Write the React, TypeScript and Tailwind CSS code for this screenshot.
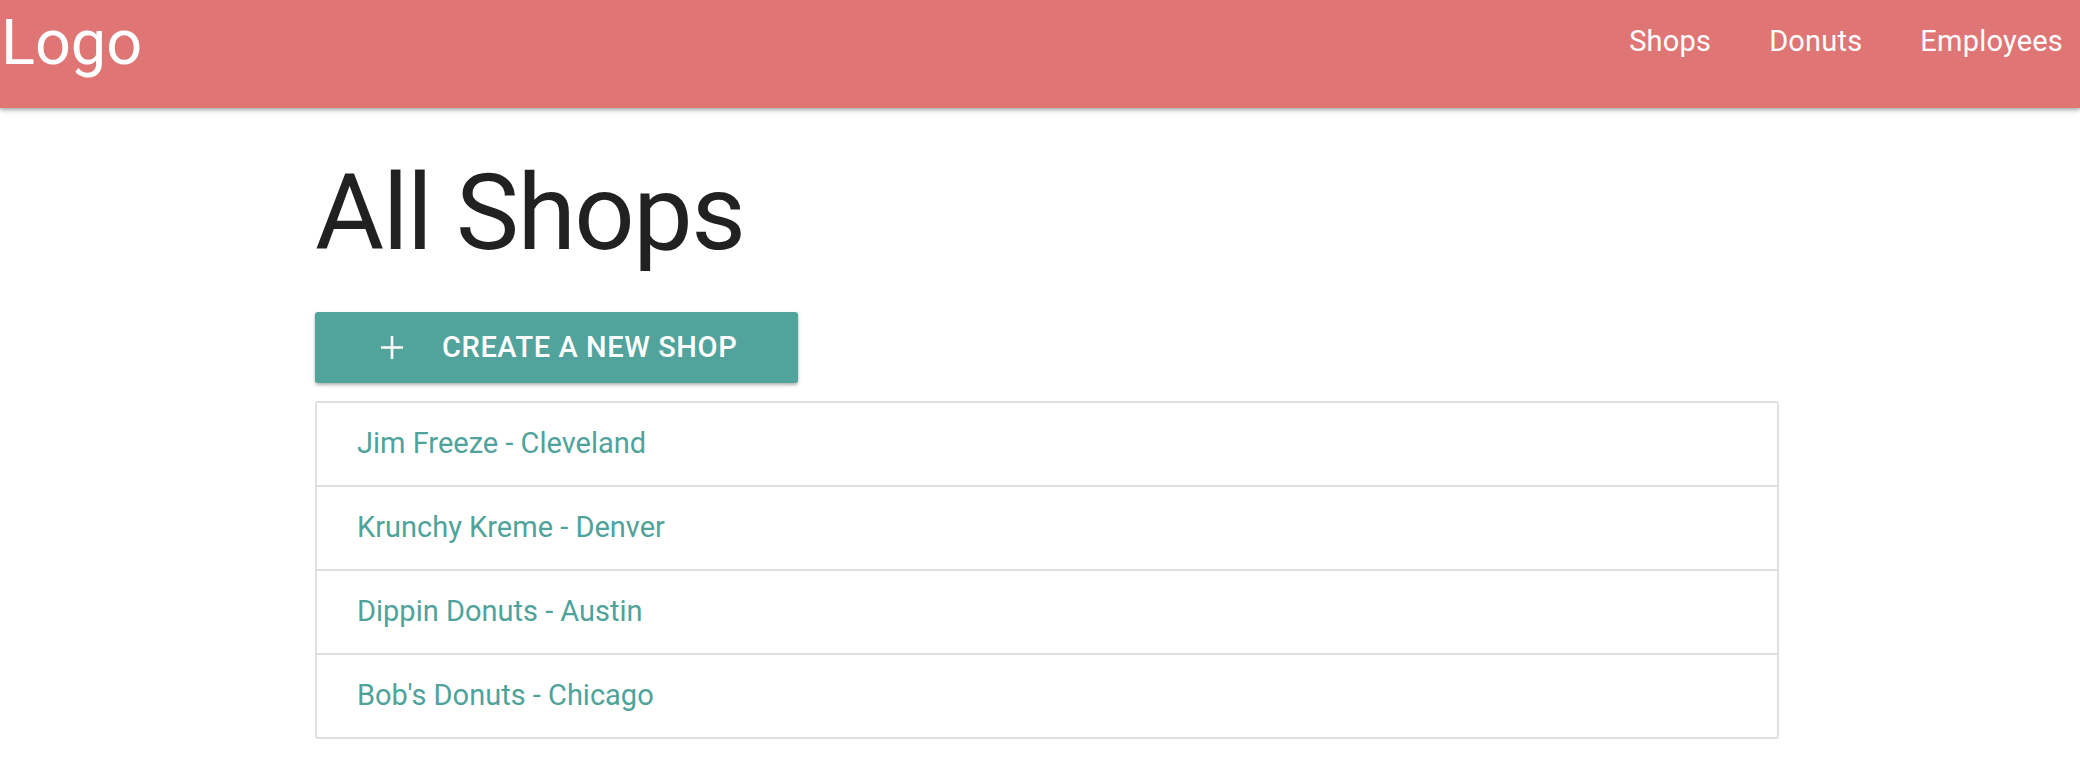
import React from "react";

const shops = [
  "Jim Freeze - Cleveland",
  "Krunchy Kreme - Denver",
  "Dippin Donuts - Austin",
  "Bob's Donuts - Chicago",
];

const links = ["Shops", "Donuts", "Employees"];

const PlusIcon = () => (
  <svg width="22" height="23" viewBox="0 0 22 23" className="shrink-0">
    <path d="M11 0v23M0 11.5h22" stroke="white" strokeWidth="2.6" fill="none" />
  </svg>
);

export default function App() {
  return (
    <div className="min-h-[780px] bg-white font-['Roboto',sans-serif]">
      <nav className="h-[108px] bg-[#e07575] flex justify-between items-start text-white shadow-[0_2px_3px_rgba(0,0,0,0.22),0_3px_6px_rgba(0,0,0,0.12)]">
        <a className="pl-[1px] text-[63px] leading-[85px]">Logo</a>
        <ul className="flex gap-[58px] pr-[17px]">
          {links.map((l) => (
            <li key={l} className="text-[29px] leading-[83px] tracking-[0.2px]">
              {l}
            </li>
          ))}
        </ul>
      </nav>

      <main className="ml-[315px] w-[1464px]">
        <h1 className="mt-[52px] text-[106px] leading-none text-[#212121] tracking-[-1.5px]">
          All Shops
        </h1>

        <button className="mt-[46px] h-[71px] w-[483px] pl-[66px] flex items-center gap-[39px] rounded-[3px] bg-[#51a39b] text-white text-[29px] font-medium uppercase tracking-[0.6px] shadow-[0_2px_3px_rgba(0,0,0,0.2),0_2px_5px_rgba(0,0,0,0.12)]">
          <PlusIcon />
          <span>Create a new shop</span>
        </button>

        <ul className="mt-[18px] border-2 border-[#e0e0e0] rounded-[3px]">
          {shops.map((s, i) => (
            <li
              key={s}
              className={`h-[82px] pl-[40px] flex items-center text-[29px] text-[#4fa39a] ${
                i < shops.length - 1 ? "box-content border-b-2 border-[#e0e0e0]" : ""
              }`}
            >
              {s}
            </li>
          ))}
        </ul>
      </main>
    </div>
  );
}
